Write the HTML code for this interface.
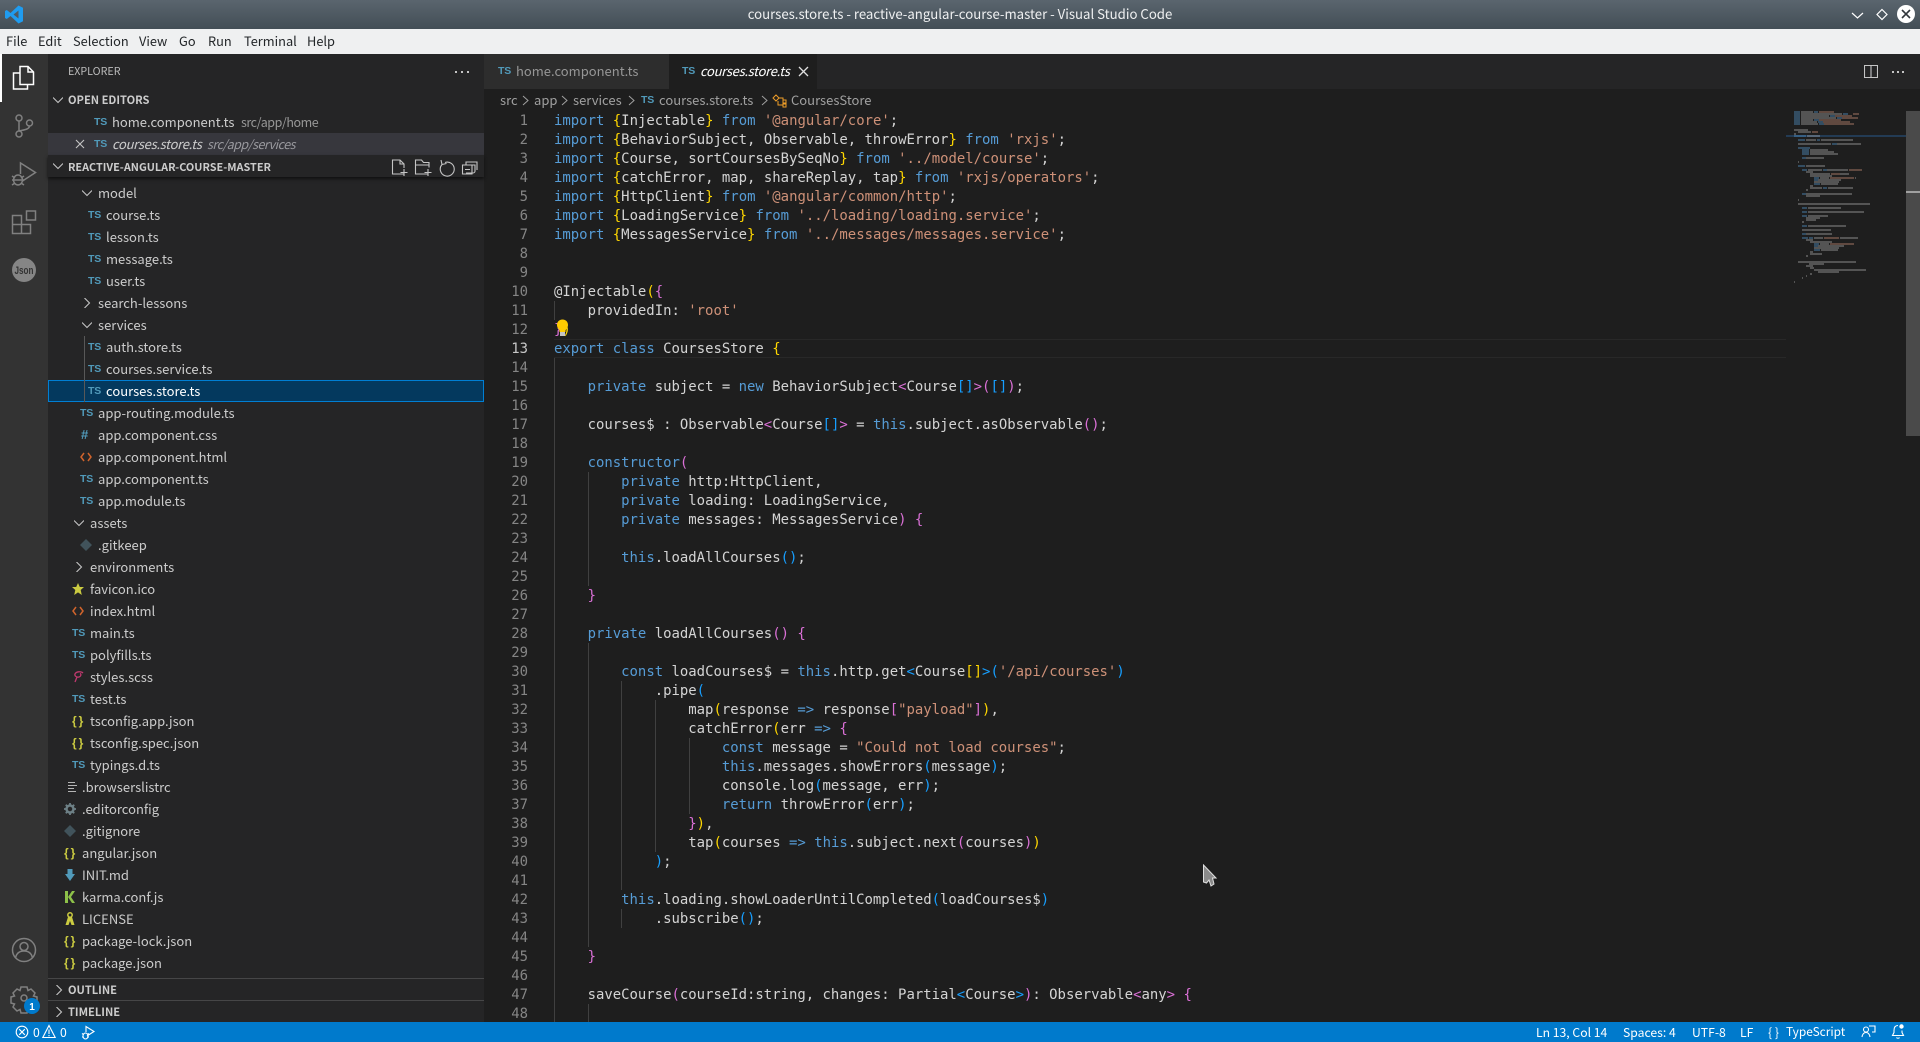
<!DOCTYPE html>
<html lang="en">
<head>
<meta charset="utf-8">
<title>courses.store.ts - VS Code</title>
<style>
html,body{margin:0;padding:0;width:1920px;height:1042px;overflow:hidden;background:#1e1e1e}
body{position:relative;font-family:"Noto Sans CJK JP","Liberation Sans",sans-serif;color:#ccc}
div,span,svg{box-sizing:border-box}
.a{position:absolute}
#title{left:0;top:0;width:1920px;height:29px;background:linear-gradient(#5a656e,#434e56);text-align:center;line-height:28px;font-size:13.2px;color:#eff0f1}
#menu{left:0;top:29px;width:1920px;height:25px;background:#eff0f1;color:#232629;font-size:12.8px;line-height:24px}
#menu span{position:absolute;top:0}
#act{left:0;top:54px;width:48px;height:968px;background:#333}
#side{left:48px;top:54px;width:436px;height:968px;background:#252526}
.r{position:absolute;left:48px;width:436px;height:22px;line-height:22px;font-size:13px;color:#ccc;white-space:pre}
.r .t{position:absolute;top:0}
.r .c{position:absolute;top:6px;width:10px;height:10px}
.ts,.ic{position:absolute;top:0;font-family:"Liberation Sans",sans-serif;font-weight:bold}
.ts{color:#519aba;font-size:10.5px;letter-spacing:-.2px;line-height:22px}
.j{color:#cbcb41;font-size:12px;letter-spacing:2px;line-height:22px}
.h{font-weight:bold;font-size:11.1px;color:#ccc;line-height:23px}
.i{font-style:italic;letter-spacing:-.3px}
#sb{left:0;top:1022px;width:1920px;height:20px;background:#007acc;color:#fff;font-size:12.2px;line-height:20px}
#sb span{position:absolute;top:0;white-space:pre}
#code,#nums{font-family:"DejaVu Sans Mono","Liberation Mono",monospace;font-size:13.95px;line-height:19px;white-space:pre;top:111px;height:911px;overflow:hidden;padding-top:1px}
#code{left:554px;width:1230px;color:#d4d4d4}
#nums{left:484px;width:44px;text-align:right;color:#858585}
#nums b{font-weight:normal;color:#c6c6c6}
.k{color:#569cd6}.s{color:#ce9178}.g{color:#ffd700}.o{color:#da70d6}.b{color:#179fff}
.gd{position:absolute;width:1px;background:#404040}
</style>
</head>
<body>
<div class="a" id="title">courses.store.ts - reactive-angular-course-master - Visual Studio Code</div>
<svg class="a" style="left:5px;top:5px" width="19" height="19" viewBox="0 0 19 19"><path d="M13.5 0.5L18 2.7V16.3L13.5 18.5L5.5 11L1.8 14L0 13V6L1.8 5L5.5 8ZM13.5 5.5L8.5 9.5L13.5 13.5Z" fill="#1f9cf0"/></svg>
<svg class="a" style="left:1845px;top:3px" width="75" height="23" viewBox="0 0 75 23"><path d="M7 10l5.500 5 5.500-5" fill="none" stroke="#fff" stroke-width="1.200"/><path d="M37 6.500l5 5-5 5-5-5z" fill="none" stroke="#fff" stroke-width="1.200"/><circle cx="61" cy="11" r="9" fill="#fff"/><path d="M57 7l8 8M65 7l-8 8" stroke="#31363b" stroke-width="1.600"/></svg>

<div class="a" id="menu"><span style="left:6px">File</span><span style="left:38px">Edit</span><span style="left:73px">Selection</span><span style="left:139px">View</span><span style="left:179px">Go</span><span style="left:208px">Run</span><span style="left:244px">Terminal</span><span style="left:307px">Help</span></div>

<div class="a" id="act"></div>
<div class="a" style="left:0;top:54px;width:2px;height:48px;background:#fff"></div>
<svg class="a" style="left:0;top:54px" width="48" height="968" viewBox="0 54 48 968" fill="none">
<g stroke="#fff" stroke-width="1.500"><path d="M20 66.500h8l5.500 5.500v12.500H20z"/><path d="M28 66.500v5.500h5.500"/><path d="M20 73h-6.500v16h14v-4.500"/></g>
<g stroke="#808080" stroke-width="1.500"><circle cx="19" cy="118" r="3"/><circle cx="29.500" cy="123" r="3"/><circle cx="19" cy="134" r="3"/><path d="M19 121v10M29.500 126c0 3-5 4-10.500 5"/>
<path d="M20.500 174v-11l15 9.500-13 8.500"/><ellipse cx="18" cy="180" rx="4.500" ry="5"/><path d="M12 176l3 2M24 176l-3 2M12 180h2M24 180h-2M12 185l3-2M24 185l-3-2M14 180h8"/>
<path d="M12.500 215.500h9v9h9v9h-18zM12.500 224.500h9v9"/><rect x="26.500" y="211" width="9" height="9"/>
<circle cx="24" cy="950" r="11.500"/><circle cx="24" cy="946.500" r="4"/><path d="M15.500 958c1-5 4-7 8.500-7s7.500 2 8.500 7"/>
<path d="M21 987h6l1 3.500 3-1.500 4 4-1.500 3 3.500 1v6l-3.500 1 1.500 3-4 4-3-1.500-1 3.500h-6l-1-3.500-3 1.500-4-4 1.500-3-3.500-1v-6l3.500-1-1.500-3 4-4 3 1.500z"/><circle cx="24" cy="998" r="3"/></g>
<circle cx="24" cy="270" r="12" fill="#858585"/>
<text x="24" y="274" text-anchor="middle" font-family="Liberation Sans,sans-serif" font-size="11" font-weight="bold" fill="#333" textLength="19" lengthAdjust="spacingAndGlyphs">Json</text>
<circle cx="32" cy="1006" r="8" fill="#007acc"/>
<text x="32" y="1010" text-anchor="middle" font-family="Liberation Sans,sans-serif" font-size="10" font-weight="bold" fill="#fff">1</text>
</svg>

<div class="a" id="side"></div>
<div class="a h" style="left:68px;top:61px;font-weight:normal;color:#bbb;line-height:22px;font-size:10.7px">EXPLORER</div>
<svg class="a" style="left:454px;top:70px" width="16" height="4"><g fill="#c5c5c5"><rect x="1" y="1" width="2" height="2"/><rect x="7" y="1" width="2" height="2"/><rect x="13" y="1" width="2" height="2"/></g></svg>

<div class="a" style="left:48px;top:133px;width:436px;height:22px;background:#37373d"></div>
<div class="a" style="left:48px;top:380px;width:436px;height:22px;background:#04395e;border:1px solid #007fd4"></div>
<div class="a" style="left:84px;top:336px;width:1px;height:66px;background:#585858"></div>
<div class="a" style="left:48px;top:155px;width:436px;height:22px;background:#252526;box-shadow:0 2px 3px #111"></div>
<div class="a" style="left:48px;top:978px;width:436px;height:1px;background:#464647"></div>
<div class="a" style="left:48px;top:1000px;width:436px;height:1px;background:#464647"></div>

<div class="r" style="top:89px"><svg class="c" style="left:5px" viewBox="0 0 10 10"><path d="M0 2.500l5 5 5-5" fill="none" stroke="#c5c5c5" stroke-width="1.100"/></svg><span class="t h" style="left:20px;line-height:22px">OPEN EDITORS</span></div>
<div class="r" style="top:111px"><span class="ts" style="left:46px">TS</span><span class="t" style="left:64px">home.component.ts</span><span class="t" style="left:193px;color:#979797;font-size:12.5px;letter-spacing:-.45px">src/app/home</span></div>
<div class="r" style="top:133px"><svg class="c" style="left:27px" viewBox="0 0 10 10"><path d="M1 1l8 8M9 1l-8 8" stroke="#c5c5c5" stroke-width="1.100"/></svg><span class="ts" style="left:46px">TS</span><span class="t i" style="left:64px">courses.store.ts</span><span class="t" style="left:159px;font-style:italic;color:#9a9a9f;font-size:12.5px;letter-spacing:-.48px">src/app/services</span></div>
<div class="r" style="top:155px"><svg class="c" style="left:5px" viewBox="0 0 10 10"><path d="M0 2.500l5 5 5-5" fill="none" stroke="#c5c5c5" stroke-width="1.100"/></svg><span class="t h" style="left:20px;line-height:24px;font-size:10.9px">REACTIVE-ANGULAR-COURSE-MASTER</span></div>
<svg class="a" style="left:390px;top:157px" width="90" height="20" viewBox="0 0 90 20" fill="none" stroke="#c5c5c5" stroke-width="1.100"><path d="M14 17H2.500V3h7.500l4 4v4M10 3v4h4M14 12v7M10.500 15.500h7"/><path d="M38 17H25.500V3h6l2 2.500h5.500v5M25.500 8h13.500M38 12v7M34.500 15.500h7"/><path d="M52 7.500a7 7 0 1 0 3-2M51 3l1 4.500 4.500-1"/><path d="M74 8h11v6a2 2 0 0 1-2 2h-7M76 8V5h11v8M72.500 8h9.500v9H72.500zM75 12.500h5"/></svg>
<div class="r" style="top:182px"><svg class="c" style="left:34px" viewBox="0 0 10 10"><path d="M0 2.500l5 5 5-5" fill="none" stroke="#c5c5c5" stroke-width="1.100"/></svg><span class="t" style="left:50px">model</span></div>
<div class="r" style="top:204px"><span class="ts" style="left:40px">TS</span><span class="t" style="left:58px">course.ts</span></div>
<div class="r" style="top:226px"><span class="ts" style="left:40px">TS</span><span class="t" style="left:58px">lesson.ts</span></div>
<div class="r" style="top:248px"><span class="ts" style="left:40px">TS</span><span class="t" style="left:58px">message.ts</span></div>
<div class="r" style="top:270px"><span class="ts" style="left:40px">TS</span><span class="t" style="left:58px">user.ts</span></div>
<div class="r" style="top:292px"><svg class="c" style="left:34px" viewBox="0 0 10 10"><path d="M2.500 0l5 5-5 5" fill="none" stroke="#c5c5c5" stroke-width="1.100"/></svg><span class="t" style="left:50px">search-lessons</span></div>
<div class="r" style="top:314px"><svg class="c" style="left:34px" viewBox="0 0 10 10"><path d="M0 2.500l5 5 5-5" fill="none" stroke="#c5c5c5" stroke-width="1.100"/></svg><span class="t" style="left:50px">services</span></div>
<div class="r" style="top:336px"><span class="ts" style="left:40px">TS</span><span class="t" style="left:58px">auth.store.ts</span></div>
<div class="r" style="top:358px"><span class="ts" style="left:40px">TS</span><span class="t" style="left:58px">courses.service.ts</span></div>
<div class="r" style="top:380px"><span class="ts" style="left:40px">TS</span><span class="t" style="left:58px;color:#fff">courses.store.ts</span></div>
<div class="r" style="top:402px"><span class="ts" style="left:32px">TS</span><span class="t" style="left:50px">app-routing.module.ts</span></div>
<div class="r" style="top:424px"><span class="ic" style="left:33px;color:#519aba;font-size:13px">#</span><span class="t" style="left:50px">app.component.css</span></div>
<div class="r" style="top:446px"><svg class="c" style="left:32px;top:5px;width:12px;height:12px" viewBox="0 0 12 12"><path d="M4 2L1 6l3 4M8 2l3 4-3 4" fill="none" stroke="#d0642c" stroke-width="1.500"/></svg><span class="t" style="left:50px">app.component.html</span></div>
<div class="r" style="top:468px"><span class="ts" style="left:32px">TS</span><span class="t" style="left:50px">app.component.ts</span></div>
<div class="r" style="top:490px"><span class="ts" style="left:32px">TS</span><span class="t" style="left:50px">app.module.ts</span></div>
<div class="r" style="top:512px"><svg class="c" style="left:26px" viewBox="0 0 10 10"><path d="M0 2.500l5 5 5-5" fill="none" stroke="#c5c5c5" stroke-width="1.100"/></svg><span class="t" style="left:42px">assets</span></div>
<div class="r" style="top:534px"><svg class="c" style="left:32px;top:5px;width:12px;height:12px" viewBox="0 0 12 12"><path d="M6 0l6 6-6 6-6-6z" fill="#41535b"/></svg><span class="t" style="left:50px">.gitkeep</span></div>
<div class="r" style="top:556px"><svg class="c" style="left:26px" viewBox="0 0 10 10"><path d="M2.500 0l5 5-5 5" fill="none" stroke="#c5c5c5" stroke-width="1.100"/></svg><span class="t" style="left:42px">environments</span></div>
<div class="r" style="top:578px"><svg class="c" style="left:24px;top:5px;width:12px;height:12px" viewBox="0 0 12 12"><path d="M6 0l1.800 4H12L8.700 7l1.100 5L6 9.400 2.200 12l1.100-5L0 4h4.200z" fill="#cbcb41"/></svg><span class="t" style="left:42px">favicon.ico</span></div>
<div class="r" style="top:600px"><svg class="c" style="left:24px;top:5px;width:12px;height:12px" viewBox="0 0 12 12"><path d="M4 2L1 6l3 4M8 2l3 4-3 4" fill="none" stroke="#d0642c" stroke-width="1.500"/></svg><span class="t" style="left:42px">index.html</span></div>
<div class="r" style="top:622px"><span class="ts" style="left:24px">TS</span><span class="t" style="left:42px">main.ts</span></div>
<div class="r" style="top:644px"><span class="ts" style="left:24px">TS</span><span class="t" style="left:42px">polyfills.ts</span></div>
<div class="r" style="top:666px"><svg class="c" style="left:24px;top:5px;width:12px;height:12px" viewBox="0 0 12 12"><path d="M11 2C9 0 4 .5 3 3c-.8 2.200 2 3.500 4 3 2-.5 2.500-3 1-3.500M5 6L3 11" fill="none" stroke="#c0396e" stroke-width="1.300"/></svg><span class="t" style="left:42px">styles.scss</span></div>
<div class="r" style="top:688px"><span class="ts" style="left:24px">TS</span><span class="t" style="left:42px">test.ts</span></div>
<div class="r" style="top:710px"><span class="ic j" style="left:24px">{}</span><span class="t" style="left:42px">tsconfig.app.json</span></div>
<div class="r" style="top:732px"><span class="ic j" style="left:24px">{}</span><span class="t" style="left:42px">tsconfig.spec.json</span></div>
<div class="r" style="top:754px"><span class="ts" style="left:24px">TS</span><span class="t" style="left:42px">typings.d.ts</span></div>
<div class="r" style="top:776px"><svg class="c" style="left:20px;top:5px;width:10px;height:12px" viewBox="0 0 10 12"><path d="M0 1.500h7M0 4.500h9M0 7.500h6M0 10.500h8" stroke="#b5b5b5" stroke-width="1.100"/></svg><span class="t" style="left:34px">.browserslistrc</span></div>
<div class="r" style="top:798px"><svg class="c" style="left:16px;top:5px;width:12px;height:12px" viewBox="0 0 12 12"><circle cx="6" cy="6" r="3.500" fill="none" stroke="#6d8086" stroke-width="2.500"/><path d="M6 0v2M6 10v2M0 6h2M10 6h2M1.800 1.800l1.400 1.400M8.800 8.800l1.400 1.400M10.200 1.800L8.800 3.200M3.200 8.800l-1.400 1.400" stroke="#6d8086" stroke-width="1.800"/></svg><span class="t" style="left:34px">.editorconfig</span></div>
<div class="r" style="top:820px"><svg class="c" style="left:16px;top:5px;width:12px;height:12px" viewBox="0 0 12 12"><path d="M6 0l6 6-6 6-6-6z" fill="#41535b"/></svg><span class="t" style="left:34px">.gitignore</span></div>
<div class="r" style="top:842px"><span class="ic j" style="left:16px">{}</span><span class="t" style="left:34px">angular.json</span></div>
<div class="r" style="top:864px"><svg class="c" style="left:17px;top:5px;width:10px;height:12px" viewBox="0 0 10 12"><path d="M2.500 0h5v5H10L5 12 0 5h2.500z" fill="#519aba"/></svg><span class="t" style="left:34px">INIT.md</span></div>
<div class="r" style="top:886px"><svg class="c" style="left:17px;top:5px;width:10px;height:12px" viewBox="0 0 10 12"><path d="M0 0h3v12H0zM3 6l4-6h3L6 6l4 6H7z" fill="#8dc149"/></svg><span class="t" style="left:34px">karma.conf.js</span></div>
<div class="r" style="top:908px"><svg class="c" style="left:17px;top:4px;width:10px;height:14px" viewBox="0 0 10 14"><circle cx="5" cy="3" r="2.200" fill="none" stroke="#cbcb41" stroke-width="1.500"/><path d="M3 5L0.500 13h3L5 9l1.500 4h3L7 5" fill="#cbcb41"/></svg><span class="t" style="left:34px">LICENSE</span></div>
<div class="r" style="top:930px"><span class="ic j" style="left:16px">{}</span><span class="t" style="left:34px">package-lock.json</span></div>
<div class="r" style="top:952px"><span class="ic j" style="left:16px">{}</span><span class="t" style="left:34px">package.json</span></div>
<div class="r" style="top:979px"><svg class="c" style="left:6px" viewBox="0 0 10 10"><path d="M2.500 0l5 5-5 5" fill="none" stroke="#c5c5c5" stroke-width="1.100"/></svg><span class="t h" style="left:20px">OUTLINE</span></div>
<div class="r" style="top:1001px"><svg class="c" style="left:6px" viewBox="0 0 10 10"><path d="M2.500 0l5 5-5 5" fill="none" stroke="#c5c5c5" stroke-width="1.100"/></svg><span class="t h" style="left:20px">TIMELINE</span></div>

<!-- tabs -->
<div class="a" style="left:484px;top:54px;width:1436px;height:35px;background:#252526"></div>
<div class="a" style="left:484px;top:54px;width:185px;height:35px;background:#2d2d2d"></div>
<div class="a" style="left:669px;top:54px;width:148px;height:35px;background:#1e1e1e"></div>
<span class="a ts" style="left:498px;top:60px">TS</span>
<span class="a" style="left:516px;top:60px;font-size:13px;line-height:22px;color:#969696">home.component.ts</span>
<span class="a ts" style="left:682px;top:60px">TS</span>
<span class="a i" style="left:700px;top:60px;font-size:13px;line-height:22px;color:#fff">courses.store.ts</span>
<svg class="a" style="left:798px;top:66px" width="11" height="11"><path d="M1 1l9 9M10 1l-9 9" stroke="#e0e0e0" stroke-width="1.300"/></svg>
<svg class="a" style="left:1864px;top:65px" width="14" height="13"><path d="M.5.500h13v12H.500zM7 .5v12" fill="none" stroke="#c5c5c5" stroke-width="1.100"/></svg>
<svg class="a" style="left:1891px;top:70px" width="14" height="4"><g fill="#c5c5c5"><rect x="1" y="1" width="2" height="2"/><rect x="6" y="1" width="2" height="2"/><rect x="11" y="1" width="2" height="2"/></g></svg>

<!-- breadcrumbs -->
<div class="a" style="left:484px;top:89px;width:1300px;height:22px;font-size:13px;line-height:22px;color:#a0a0a0;white-space:pre"><span class="a" style="left:16px;top:0">src</span><span class="a" style="left:50px;top:0">app</span><span class="a" style="left:89px;top:0">services</span><span class="a" style="left:175px;top:0">courses.store.ts</span><span class="a" style="left:307px;top:0">CoursesStore</span><span class="a ts" style="left:157px;top:0">TS</span></div>
<svg class="a" style="left:520px;top:93px" width="280" height="15" viewBox="0 0 280 15" fill="none" stroke="#a0a0a0" stroke-width="1"><path d="M3 3l5 4.500-5 4.500M42 3l5 4.500-5 4.500M109 3l5 4.500-5 4.500M242 3l5 4.500-5 4.500"/><path d="M256 2l3 3-3 3-3-3zM263 7h3v3h-3zM263 11h3v3h-3zM259 5h4v2M258 8v4h5" stroke="#ee9d28"/></svg>

<!-- editor -->
<div class="a" style="left:554px;top:339px;width:1232px;height:19px;border-top:1px solid #282828;border-bottom:1px solid #282828"></div>
<div class="gd" style="left:554px;top:301px;height:19px"></div>
<div class="gd" style="left:554px;top:358px;height:664px"></div>
<div class="gd" style="left:588px;top:472px;height:114px"></div>
<div class="gd" style="left:588px;top:643px;height:304px"></div>
<div class="gd" style="left:588px;top:1004px;height:18px"></div>
<div class="gd" style="left:621px;top:681px;height:209px"></div>
<div class="gd" style="left:621px;top:909px;height:19px"></div>
<div class="gd" style="left:655px;top:700px;height:152px"></div>
<div class="gd" style="left:689px;top:738px;height:76px"></div>

<div class="a" id="nums">1
2
3
4
5
6
7
8
9
10
11
12
<b>13</b>
14
15
16
17
18
19
20
21
22
23
24
25
26
27
28
29
30
31
32
33
34
35
36
37
38
39
40
41
42
43
44
45
46
47
48</div>

<div class="a" id="code"><span class="k">import</span> <span class="g">{</span>Injectable<span class="g">}</span> <span class="k">from</span> <span class="s">'@angular/core'</span>;
<span class="k">import</span> <span class="g">{</span>BehaviorSubject, Observable, throwError<span class="g">}</span> <span class="k">from</span> <span class="s">'rxjs'</span>;
<span class="k">import</span> <span class="g">{</span>Course, sortCoursesBySeqNo<span class="g">}</span> <span class="k">from</span> <span class="s">'../model/course'</span>;
<span class="k">import</span> <span class="g">{</span>catchError, map, shareReplay, tap<span class="g">}</span> <span class="k">from</span> <span class="s">'rxjs/operators'</span>;
<span class="k">import</span> <span class="g">{</span>HttpClient<span class="g">}</span> <span class="k">from</span> <span class="s">'@angular/common/http'</span>;
<span class="k">import</span> <span class="g">{</span>LoadingService<span class="g">}</span> <span class="k">from</span> <span class="s">'../loading/loading.service'</span>;
<span class="k">import</span> <span class="g">{</span>MessagesService<span class="g">}</span> <span class="k">from</span> <span class="s">'../messages/messages.service'</span>;


@Injectable<span class="g">(</span><span class="o">{</span>
    providedIn: <span class="s">'root'</span>
<span class="o">}</span><span class="g">)</span>
<span class="k">export</span> <span class="k">class</span> CoursesStore <span class="g">{</span>

    <span class="k">private</span> subject = <span class="k">new</span> BehaviorSubject<span class="o">&lt;</span>Course<span class="b">[]</span><span class="o">&gt;(</span><span class="b">[]</span><span class="o">)</span>;

    courses$ : Observable<span class="o">&lt;</span>Course<span class="b">[]</span><span class="o">&gt;</span> = <span class="k">this</span>.subject.asObservable<span class="o">()</span>;

    <span class="k">constructor</span><span class="o">(</span>
        <span class="k">private</span> http:HttpClient,
        <span class="k">private</span> loading: LoadingService,
        <span class="k">private</span> messages: MessagesService<span class="o">)</span> <span class="o">{</span>

        <span class="k">this</span>.loadAllCourses<span class="b">()</span>;

    <span class="o">}</span>

    <span class="k">private</span> loadAllCourses<span class="o">()</span> <span class="o">{</span>

        <span class="k">const</span> loadCourses$ = <span class="k">this</span>.http.get<span class="b">&lt;</span>Course<span class="g">[]</span><span class="b">&gt;(</span><span class="s">'/api/courses'</span><span class="b">)</span>
            .pipe<span class="b">(</span>
                map<span class="g">(</span>response <span class="k">=&gt;</span> response<span class="o">[</span><span class="s">"payload"</span><span class="o">]</span><span class="g">)</span>,
                catchError<span class="g">(</span>err <span class="k">=&gt;</span> <span class="o">{</span>
                    <span class="k">const</span> message = <span class="s">"Could not load courses"</span>;
                    <span class="k">this</span>.messages.showErrors<span class="b">(</span>message<span class="b">)</span>;
                    console.log<span class="b">(</span>message, err<span class="b">)</span>;
                    <span class="k">return</span> throwError<span class="b">(</span>err<span class="b">)</span>;
                <span class="o">}</span><span class="g">)</span>,
                tap<span class="g">(</span>courses <span class="k">=&gt;</span> <span class="k">this</span>.subject.next<span class="o">(</span>courses<span class="o">)</span><span class="g">)</span>
            <span class="b">)</span>;

        <span class="k">this</span>.loading.showLoaderUntilCompleted<span class="b">(</span>loadCourses$<span class="b">)</span>
            .subscribe<span class="b">()</span>;

    <span class="o">}</span>

    saveCourse<span class="o">(</span>courseId:string, changes: Partial<span class="b">&lt;</span>Course<span class="b">&gt;</span><span class="o">)</span>: Observable<span class="o">&lt;</span>any<span class="o">&gt;</span> <span class="o">{</span>
</div>

<svg class="a" style="left:556px;top:319px" width="13" height="18" viewBox="0 0 13 18"><path d="M6.500 0.500C3 .5 1 3 1 6c0 2.500 1.500 3.500 2.500 5.500V13h6v-1.500C10.500 9.500 12 8.500 12 6c0-3-2-5.500-5.500-5.500z" fill="#fc0"/><rect x="4" y="13" width="5" height="4" fill="#eee" opacity=".8"/></svg>

<!-- minimap -->
<svg class="a" style="left:1786px;top:111px" width="120" height="911" viewBox="1786 111 120 911" fill="none" stroke-width="1.200">
<rect x="1786" y="135" width="120" height="2" fill="#264f78" opacity=".6" stroke="none"/>
<path stroke="#569cd6" opacity=".6" d="M1794 112h6M1814 112h4M1794 114h6M1843 114h5M1794 116h6M1830 116h5M1794 118h6M1837 118h5M1794 120h6M1814 120h5M1794 122h6M1818 122h5M1794 124h6M1819 124h5M1794 136h12M1798 140h7M1817 140h3M1832 144h5M1798 148h12M1802 150h7M1802 152h7M1802 154h7M1802 158h4M1798 166h7M1802 170h5M1823 170h4M1814 178h5M1814 180h4M1814 184h6M1823 188h4M1802 194h4M1802 208h5M1802 212h5M1802 216h5M1802 226h5M1802 234h4M1802 238h6M1809 238h4M1814 244h5M1814 246h4M1814 250h6"/>
<path stroke="#ce9178" opacity=".6" d="M1819 112h15M1853 114h6M1835 116h17M1842 118h16M1819 120h22M1823 122h27M1824 124h30M1812 132h6M1849 170h13M1831 174h9M1830 178h24M1824 238h15M1830 244h24"/>
<path stroke="#d4d4d4" opacity=".48" d="M1801 112h12M1801 114h41M1801 116h28M1801 118h35M1801 120h12M1801 122h16M1801 124h17M1794 130h14M1798 132h13M1794 134h2M1807 136h13M1806 140h10M1821 140h32M1798 144h33M1837 144h24M1810 150h18M1810 152h24M1810 154h28M1806 158h18M1798 162h1M1806 166h19M1808 170h14M1827 170h21M1806 172h7M1810 174h20M1840 174h9M1810 176h22M1820 178h9M1855 178h1M1818 180h23M1814 182h25M1821 184h17M1810 186h3M1810 188h12M1828 188h25M1806 190h2M1806 194h46M1806 196h14M1798 200h1M1798 204h72M1808 208h33M1808 212h56M1808 216h20M1806 218h14M1806 220h10M1802 222h2M1808 226h38M1802 230h29M1806 234h26M1814 238h9M1840 238h18M1806 240h7M1810 242h22M1820 244h9M1818 246h26M1814 248h25M1821 250h17M1810 252h3M1810 254h12M1806 256h2M1798 262h58M1809 264h15M1806 266h7M1810 268h4M1814 270h52M1818 272h21M1810 274h2M1806 276h1M1802 278h1M1794 282h1"/>
</svg>
<div class="a" style="left:1906px;top:111px;width:14px;height:325px;background:#4a4a4a"></div>
<div class="a" style="left:1906px;top:191px;width:14px;height:2px;background:#a0a0a0"></div>

<!-- cursor -->
<svg class="a" style="left:1202px;top:864px" width="16" height="24" viewBox="0 0 16 24"><path d="M1.500 1L14 14h-3.500l1.500 6-3 2-2-6-2.500 3-3-1z" fill="#8a8a8a" stroke="#e0e0e0" stroke-width="1"/></svg>

<!-- status bar -->
<div class="a" id="sb">
<span style="left:33px">0</span><span style="left:60px">0</span>
<span style="left:1536px">Ln 13, Col 14</span><span style="left:1623px">Spaces: 4</span><span style="left:1692px">UTF-8</span><span style="left:1740px">LF</span><span style="left:1768px">{ }</span><span style="left:1786px;font-size:11.9px">TypeScript</span>
</div>
<svg class="a" style="left:0;top:1022px" width="1920" height="20" viewBox="0 0 1920 20" fill="none" stroke="#fff" stroke-width="1.100">
<circle cx="22" cy="10" r="5.800"/><path d="M19.200 7.200l5.600 5.600M24.800 7.200l-5.600 5.600"/>
<path d="M49 3.500l6.200 12H42.800zM49 7.500v4.500M49 13v1.300"/>
<path d="M86 10V4.500l8 5-7 4.500"/><ellipse cx="85.500" cy="14" rx="2.500" ry="3"/><path d="M82 11.500l1.500 1M89 11.500l-1.500 1M82 15h1M89 15h-1"/>
<circle cx="1866" cy="7.500" r="2.500"/><path d="M1862 15c.5-3 2-4.500 4-4.500s3.500 1.500 4 4.500M1869 4h6v6h-3"/>
<path d="M1898 3.500c-3 0-4 2-4 5v2l-1.500 3h11l-1.500-3v-2M1896.500 15.500c.5 1 2.500 1 3 0"/><circle cx="1901.500" cy="4.500" r="2.200" fill="#fff" stroke="none"/>
</svg>
</body>
</html>
